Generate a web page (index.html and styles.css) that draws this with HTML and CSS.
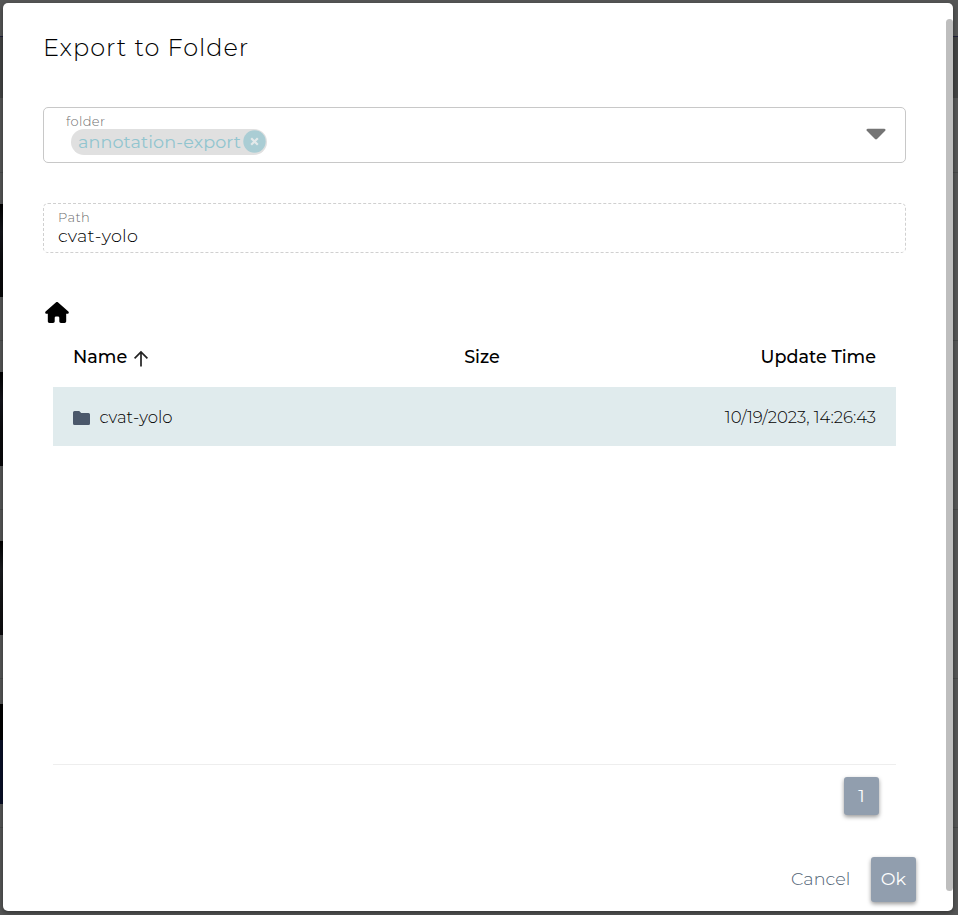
FILE: index.html
```html
<!DOCTYPE html>
<html lang="en">
<head>
<meta charset="utf-8">
<title>Export to Folder</title>
<link rel="stylesheet" href="styles.css">
</head>
<body>
<div class="backdrop">
  <main class="dialog">
    <section class="content">
      <h1 class="title">Export to Folder</h1>
      <div class="select">
        <div class="select-body">
          <label class="label">folder</label>
          <span class="chip"><span class="chip-text">annotation-export</span>
            <svg class="chip-close" viewBox="0 0 23 23"><circle cx="11.5" cy="11.5" r="11.2" fill="#aacdd4"/><path d="M8.200 8.200l6.600 6.600M14.800 8.200l-6.600 6.600" stroke="#e4e9ea" stroke-width="2.200"/></svg>
          </span>
        </div>
        <svg class="caret" viewBox="0 0 20 12"><path d="M1.600.7h16.800q1.800.5.8 2L11 11q-1 .9-2 0L.8 2.700Q-.2 1.200 1.600.7z" fill="#747474"/></svg>
      </div>
      <div class="field">
        <label class="label path-label">Path</label>
        <span class="value">cvat-yolo</span>
      </div>
      <svg class="home" viewBox="0 0 576 512"><path d="M575.800 255.500c0 18-15 32.100-32 32.100h-32l.7 160.200c0 2.700-.2 5.400-.5 8.100V472c0 22.100-17.900 40-40 40h-88c-22.100 0-40-17.900-40-40v-88c0-17.700-14.300-32-32-32h-48c-17.700 0-32 14.300-32 32v88c0 22.100-17.900 40-40 40h-88c-22.100 0-40-17.900-40-40V287.600H32c-18 0-32-14-32-32.100 0-9 3-17 10-24L266.400 8c7-7 15-8 22-8s15 2 21 7l255.400 224.500c8 7 12 15 11 24z"/></svg>
      <div class="table">
        <div class="row head">
          <div class="cell"><span class="h-name">Name</span><svg class="arrow" viewBox="0 0 16 17"><path d="M8 16.500V2M1.600 8.300L8 1.900l6.400 6.400" fill="none" stroke="#222" stroke-width="1.700"/></svg></div>
          <div class="cell center"><span class="h-size">Size</span></div>
          <div class="cell end"><span class="h-time">Update Time</span></div>
        </div>
        <div class="row item">
          <div class="cell"><svg class="folder" viewBox="0 0 17 14"><path d="M1.500 0h4.700l2 2h7.300Q17 2 17 3.500v9Q17 14 15.500 14h-14Q0 14 0 12.500v-11Q0 0 1.500 0z" fill="#4b586b"/></svg><span class="item-name">cvat-yolo</span></div>
          <div class="cell"></div>
          <div class="cell end"><span class="date">10/19/2023, 14:26:43</span></div>
        </div>
      </div>
      <div class="pager"><button class="page">1</button></div>
      <div class="actions"><button class="cancel">Cancel</button><button class="ok">Ok</button></div>
    </section>
    <div class="scrollbar"></div>
  </main>
</div>
</body>
</html>
```
FILE: styles.css
```css
* { box-sizing: border-box; }
body { margin: 0; font-family: Montserrat, Inter, sans-serif; font-weight: 300; color: #000; }
svg { display: block; flex: none; }
button { border: 0; padding: 0 0 2px; background: none; font: inherit; }
.backdrop {
  height: 915px; padding: 3px 5px 4px 3px; overflow: hidden;
  background:
    linear-gradient(#000, #14151b 30%, #0b0c0e 60%, #08080a) 0 204px / 3px 93px no-repeat,
    linear-gradient(#000, #14151b 30%, #0b0c0e 60%, #08080a) 0 372px / 3px 94px no-repeat,
    linear-gradient(#000, #1b1c20 30%, #141516 60%, #0c0c0e) 0 541px / 3px 94px no-repeat,
    linear-gradient(#000 0 0) 0 704px / 3px 36px no-repeat,
    linear-gradient(#080f27 0 0) 0 740px / 3px 64px no-repeat,
    linear-gradient(#20203a 0 0) 0 36px / 100% 1px no-repeat,
    linear-gradient(#434444 0 0) 0 37px / 100% 61px no-repeat,
    linear-gradient(#484949 0 0) 0 172px / 100% 1px no-repeat,
    linear-gradient(#484949 0 0) 0 340px / 100% 1px no-repeat,
    linear-gradient(#484949 0 0) 0 509px / 100% 1px no-repeat,
    linear-gradient(#484949 0 0) 0 678px / 100% 1px no-repeat,
    linear-gradient(#484949 0 0) 0 827px / 100% 1px no-repeat,
    #555656;
}
.dialog { height: 908px; display: flex; background: #fff; border-radius: 5px; box-shadow: 0 2px 5px rgba(0,0,0,.4); }
.content { width: 943px; padding: 0 40px; flex: none; }
.scrollbar { width: 7px; height: 872px; margin-top: 16px; background: #bebebe; border-radius: 4px; }
.title { margin: 29px 0 0; height: 75px; font-size: 24px; line-height: 32px; font-weight: 300; letter-spacing: .97px; }
.select { height: 56px; border: 1px solid #c8c8c8; border-radius: 5px; display: flex; justify-content: space-between; align-items: center; padding: 0 19px 3px 22px; }
.select-body { height: 52px; padding-top: 5px; }
.label { display: block; font-size: 13px; line-height: 16px; letter-spacing: .35px; color: #6f6f6f; }
.chip { display: flex; align-items: center; width: 196px; height: 26px; margin-left: 5px; padding: 0 1px 0 7px; background: #e0e0e0; border-radius: 13px; justify-content: space-between; }
.chip-text { font-size: 17.6px; line-height: 24px; letter-spacing: .1px; color: #91c5cf; font-weight: 400; white-space: nowrap; }
.chip-close { width: 23px; height: 23px; }
.caret { width: 20px; height: 12px; }
.field { height: 50px; margin-top: 40px; padding: 5px 14px; border: 1px dashed #d0d0d0; border-radius: 5px; }
.value { display: block; margin-top: 1px; font-size: 17.6px; line-height: 20px; letter-spacing: .25px; }
.home { width: 24px; height: 21px; margin: 49px 0 0 2px; }
.table { height: 438px; margin: 4px 10px 0; border-bottom: 1px solid #eee; }
.row { height: 60px; padding: 0 20px; display: grid; grid-template-columns: 1fr 1fr 1fr; align-items: center; }
.head { font-size: 17.6px; font-weight: 500; }
.head span { padding-bottom: 2px; }
.item { height: 59px; background: #e0ebed; }
.cell { display: flex; align-items: center; white-space: nowrap; }
.center { padding-left: 123.5px; }
.end { justify-content: flex-end; }
.arrow { width: 16px; height: 17px; margin: 3px 0 0 6px; }
.folder { width: 17px; height: 14px; margin: 2px 9.500px 0 0; }
.item-name, .date { font-size: 16.5px; padding-top: 1px; }
.pager { display: flex; justify-content: flex-end; padding: 12px 27px 0 0; }
.page, .ok { background: #919eae; color: #fff; border-radius: 3px; box-shadow: 0 2px 4px rgba(0,0,0,.4); }
.page { width: 35px; height: 38px; font-size: 17.6px; font-weight: 400; }
.actions { display: flex; justify-content: flex-end; align-items: center; margin: 42px -10px 0 0; height: 45px; }
.cancel { width: 59px; margin-right: 21px; font-size: 17.6px; letter-spacing: .05px; color: #4f6274; white-space: nowrap; }
.ok { width: 45px; height: 45px; font-size: 17.6px; font-weight: 400; }
```
